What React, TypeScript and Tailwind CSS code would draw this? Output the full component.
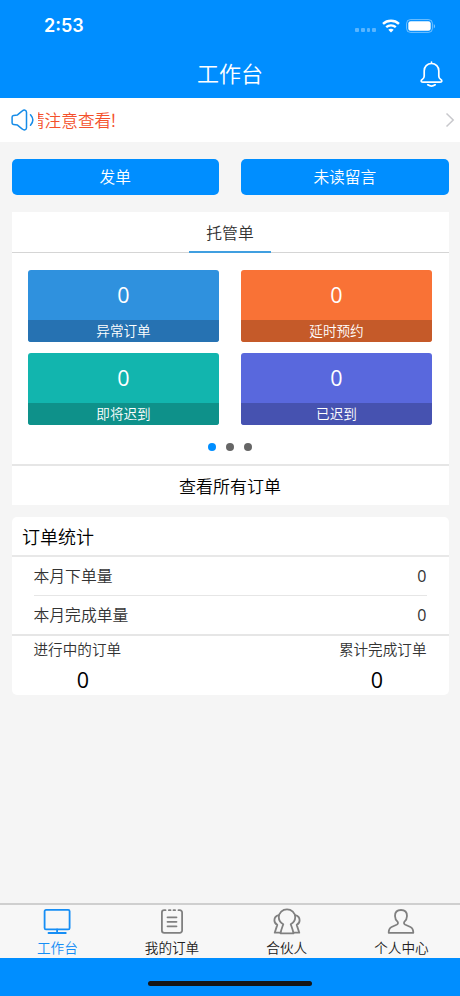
import type { ReactNode } from "react";

const tiles = [
  { label: "异常订单", value: 0, bg: "bg-[#2f91de]", bar: "bg-[#2672b2]" },
  { label: "延时预约", value: 0, bg: "bg-[#f97236]", bar: "bg-[#c55a29]" },
  { label: "即将迟到", value: 0, bg: "bg-[#12b5ae]", bar: "bg-[#0e918a]" },
  { label: "已迟到", value: 0, bg: "bg-[#5968dd]", bar: "bg-[#4652b0]" },
];

const monthly = [
  { label: "本月下单量", value: 0 },
  { label: "本月完成单量", value: 0 },
];

const totals = [
  { label: "进行中的订单", value: 0, align: "text-left" },
  { label: "累计完成订单", value: 0, align: "text-right" },
];

const tabs: { label: string; icon: ReactNode }[] = [
  {
    label: "工作台",
    icon: (
      <>
        <rect x="1.6" y="2.9" width="25" height="19.5" rx="1.4" />
        <path d="M14.1 22.5v3.2M5.5 26h17.3" />
      </>
    ),
  },
  {
    label: "我的订单",
    icon: (
      <>
        <path d="M7.5 3.2H6.2a2.3 2.3 0 0 0-2.3 2.3v18.1a2.3 2.3 0 0 0 2.3 2.3h15.6a2.3 2.3 0 0 0 2.3-2.3V5.5a2.3 2.3 0 0 0-2.3-2.3h-1.3M10.9 3.2h1.6M15.5 3.2h1.6" />
        <path d="M9.5 10.3h9M9.5 14.8h9M9.5 19.3h9" />
      </>
    ),
  },
  {
    label: "合伙人",
    icon: (
      <>
        <path d="M10.3 17.2C7.5 15.7 5.8 13.4 5.8 10.3c0-4.7 3.7-8 8.2-8s8.200 3.300 8.200 8c0 3.100-1.700 5.400-4.500 6.900 1.100 3.100 2.300 5.900 2.800 9.100H7.500c.5-3.200 1.700-6 2.800-9.100Z" />
        <path d="M6 8.2c-2.900.6-4.600 2.500-4.600 5.100 0 2 1 3.600 2.900 4.600L1.700 25.700h5.500M22 8.200c2.900.6 4.600 2.500 4.600 5.100 0 2-1 3.600-2.900 4.600l2.600 7.800h-5.500" />
      </>
    ),
  },
  {
    label: "个人中心",
    icon: (
      <path d="M10.7 14.9C8.900 13.300 8 11.300 8 9c0-3.900 2.300-6 6-6s6 2.100 6 6c0 2.300-.9 4.300-2.700 5.900-.6 1.100-.3 2.200 1.100 2.900l5 2.200c2 .9 2.900 2.500 2.900 5.800H1.700c0-3.300.9-4.900 2.900-5.800l5-2.200c1.400-.7 1.700-1.800 1.100-2.900Z" />
    ),
  },
];

function StatusBar() {
  return (
    <div className="flex h-[50px] items-center justify-between pl-11 pr-6 pt-px text-white">
      <span className="text-[18px] font-semibold leading-6">2:53</span>
      <div className="flex items-center">
        <div className="mr-[6px] mt-[9px] flex gap-[2px] opacity-35">
          {[0, 1, 2, 3].map((i) => (
            <span key={i} className="size-[3.7px] rounded-[1px] bg-white" />
          ))}
        </div>
        <svg className="mr-[6px] h-[14px] w-[18px]" viewBox="0 0 18 14" fill="none" stroke="currentColor">
          <path d="M1 4.9C5.4.7 12.6.7 17 4.9" strokeWidth="2.4" />
          <path d="M4.2 8.2c2.7-2.500 6.900-2.500 9.600 0" strokeWidth="2.3" />
          <path d="M9 13.6 6.300 10.800c1.500-1.400 3.900-1.400 5.400 0Z" fill="currentColor" stroke="none" />
        </svg>
        <svg className="h-[14px] w-[30px]" viewBox="0 0 30 14">
          <rect x="0.6" y="0.6" width="25.8" height="12.8" rx="3.8" fill="none" stroke="white" strokeOpacity="0.45" />
          <rect x="2.3" y="2.3" width="22.4" height="9.4" rx="2.3" fill="white" />
          <path d="M27.8 5v4.4c1.700-.8 1.700-3.600 0-4.400Z" fill="white" fillOpacity="0.5" />
        </svg>
      </div>
    </div>
  );
}

export default function App() {
  return (
    <div className="flex h-[996px] w-[460px] flex-col overflow-hidden bg-[#f5f5f5] font-['Inter','Noto_Sans_CJK_SC',sans-serif] font-[350] text-black">
      <header className="h-[98px] bg-[#008eff]">
        <StatusBar />
        <div className="grid h-[47px] grid-cols-[1fr_auto_1fr] items-center px-4 text-white">
          <h1 className="col-start-2 text-[22px] font-[350] leading-8">工作台</h1>
          <svg className="h-[26px] w-6 justify-self-end" viewBox="0 0 24 26" fill="none" stroke="currentColor" strokeWidth="1.7" strokeLinecap="round" strokeLinejoin="round">
            <path d="M11.5 1.2v1.2M11.5 2.5c-4.300 0-7.300 3.200-7.300 7.300v5.300c0 1.700-.5 2.500-1.700 3.100-2 1-1.700 2.900.3 2.900h17.400c2 0 2.300-1.900.3-2.900-1.200-.6-1.700-1.400-1.700-3.100V9.800c0-4.100-3-7.300-7.300-7.300Z" />
            <path d="M7.8 23.8c2.200 1.500 5.200 1.500 7.400 0" />
          </svg>
        </div>
      </header>

      <div className="flex h-11 items-center bg-white pl-[11px] pr-[5px]">
        <svg className="h-[22px] w-6 shrink-0" viewBox="0 0 24 22" fill="none" stroke="#168ce8" strokeWidth="1.5" strokeLinecap="round" strokeLinejoin="round">
          <path d="M2.6 6.4 6.5 5.9 11 2.200c2.200-1.900 4.500-1.200 4.500 1v15.600c0 2.200-2.300 2.900-4.500 1L6.500 16.100l-3.900-.5c-.9-.1-1.500-.6-1.500-1.500V7.900c0-.9.6-1.400 1.500-1.500Z" />
          <path d="M19.5 5.7c3 3.400 3 7.200 0 10.600" />
        </svg>
        <div className="ml-[3px] flex w-[100px] justify-end overflow-hidden whitespace-nowrap pt-[2px] text-[16.7px] leading-6 text-[#f4512c]">
          <span className="mr-[12px]">请注意查看<span className="-ml-[2px]">！</span></span>
        </div>
        <svg className="ml-auto h-4 w-[10px]" viewBox="0 0 10 16" fill="none" stroke="#c8c8cc" strokeWidth="1.5">
          <path d="m1.500 1.500 6.700 6.500-6.700 6.500" />
        </svg>
      </div>

      <main className="flex-1 px-[11.5px] pt-[17px]">
        <div className="grid grid-cols-2 gap-[22px] text-[15.7px] text-white">
          <button className="h-9 rounded-[5px] bg-[#008eff] pt-px">发单</button>
          <button className="h-9 rounded-[5px] bg-[#008eff] pt-px">未读留言</button>
        </div>

        <section className="mt-[17px] h-[293px] bg-white">
          <div className="flex h-[41px] justify-center border-b border-[#d5d5d5]">
            <div className="h-[41px] w-[82px] border-b-2 border-[#409fe0] text-center text-[15.8px] leading-[43px] text-[#333]">托管单</div>
          </div>
          <div className="grid grid-cols-2 gap-x-[22px] gap-y-[11px] px-[16.5px] pt-[17px] text-white">
            {tiles.map((t) => (
              <div key={t.label} className={`h-[72px] overflow-hidden rounded-[3px] text-center ${t.bg}`}>
                <div className="h-[50px] font-['Open_Sans'] text-[21.5px] font-normal leading-[50px]">{t.value}</div>
                <div className={`h-[22px] text-[13.6px] leading-[22px] ${t.bar}`}>{t.label}</div>
              </div>
            ))}
          </div>
          <div className="flex h-[39px] items-center justify-center gap-[10px] pt-[5px]">
            <span className="size-2 rounded-full bg-[#008eff]" />
            <span className="size-2 rounded-full bg-[#666]" />
            <span className="size-2 rounded-full bg-[#666]" />
          </div>
          <div className="h-[42px] border-t-2 border-[#e6e6e6] text-center text-[17px] leading-[43px]">查看所有订单</div>
        </section>

        <section className="mt-3 h-[178px] rounded-[5px] bg-white">
          <h2 className="h-10 border-b-2 border-[#e8e8e8] pl-[10.5px] text-[18px] font-[350] leading-[41px]">订单统计</h2>
          <div className="border-b-2 border-[#e6e6e6] px-[22px] text-[15.8px] leading-[39px] text-[#333]">
            {monthly.map((m) => (
              <div key={m.label} className="flex h-[39px] justify-between border-b border-[#e6e6e6] last:h-[38px] last:border-b-0">
                <span>{m.label}</span>
                <span className="font-['Open_Sans'] text-[16px] font-normal">{m.value}</span>
              </div>
            ))}
          </div>
          <div className="flex justify-between px-[22px]">
            {totals.map((t) => (
              <div key={t.label} className="w-[99px]">
                <div className={`h-[27px] text-[14.6px] leading-[28px] text-[#333] ${t.align}`}>{t.label}</div>
                <div className="text-center font-['Open_Sans'] text-[21.5px] font-normal leading-[34px]">{t.value}</div>
              </div>
            ))}
          </div>
        </section>
      </main>

      <nav className="grid h-[55px] grid-cols-[repeat(4,114.7px)] border-t-2 border-[#cfcfcf] bg-[#f7f7f7]">
        {tabs.map((t, i) => (
          <div key={t.label} className={`flex flex-col items-center pt-[2px] ${i === 0 ? "text-[#168ef5]" : "text-[#222]"}`}>
            <svg className={`size-7 ${i === 0 ? "text-[#168ef5]" : "text-[#808080]"}`} viewBox="0 0 28 28" fill="none" stroke="currentColor" strokeWidth="1.8" strokeLinecap="round" strokeLinejoin="round">
              {t.icon}
            </svg>
            <span className="text-[13.6px] leading-[26px]">{t.label}</span>
          </div>
        ))}
      </nav>
      <footer className="flex h-[38px] justify-center bg-[#008eff] pt-[23px]">
        <div className="h-[5px] w-[164px] rounded-full bg-[#151515]" />
      </footer>
    </div>
  );
}
